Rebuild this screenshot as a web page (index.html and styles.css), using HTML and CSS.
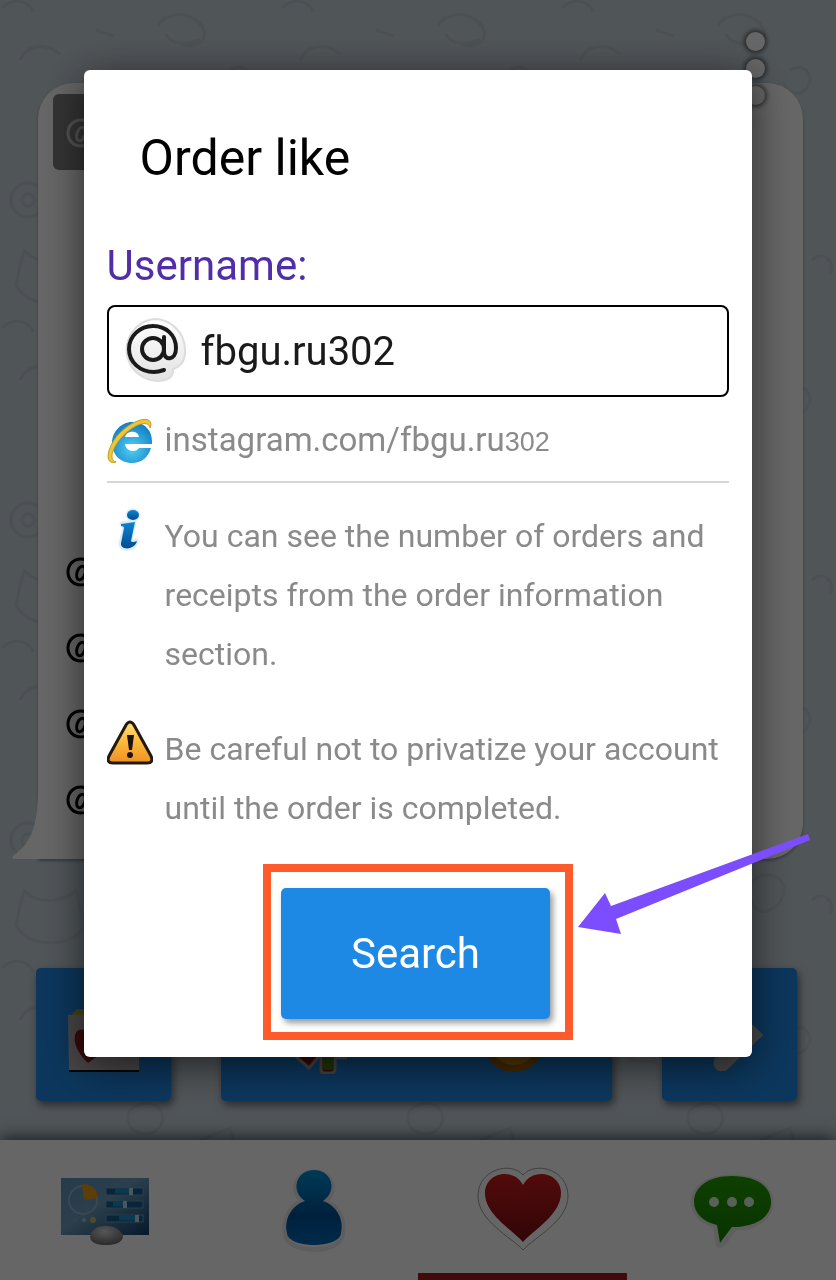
FILE: index.html
```html
<!DOCTYPE html>
<html lang="en">

<head>
    <meta charset="UTF-8">
    <meta name="viewport" content="width=device-width, initial-scale=1.0">
    <title>Order like</title>
    <link rel="stylesheet" href="styles.css">
</head>

<body>
    <svg width="0" height="0" class="defs" aria-hidden="true">
        <defs>
            <linearGradient id="blue" x1="0" y1="0" x2="0" y2="1">
                <stop offset="0" stop-color="#0a86cf" />
                <stop offset="1" stop-color="#034a94" />
            </linearGradient>
            <linearGradient id="person" x1="0" y1="0" x2="0" y2="1">
                <stop offset="0" stop-color="#0090d8" />
                <stop offset=".6" stop-color="#005298" />
                <stop offset="1" stop-color="#006ab8" />
            </linearGradient>
            <linearGradient id="red" x1="0" y1="0" x2="0" y2="1">
                <stop offset="0" stop-color="#cc1c1c" />
                <stop offset="1" stop-color="#7c0e12" />
            </linearGradient>
            <linearGradient id="green" x1="0" y1="0" x2="0" y2="1">
                <stop offset="0" stop-color="#23a000" />
                <stop offset="1" stop-color="#168000" />
            </linearGradient>
            <linearGradient id="board" x1="0" y1="0" x2="1" y2="1">
                <stop offset="0" stop-color="#5d93bd" />
                <stop offset=".45" stop-color="#6c9dbd" />
                <stop offset="1" stop-color="#11406f" />
            </linearGradient>
            <linearGradient id="gold" x1="0" y1="0" x2="0" y2="1">
                <stop offset="0" stop-color="#ffe07a" />
                <stop offset=".5" stop-color="#fdb73a" />
                <stop offset="1" stop-color="#ee9125" />
            </linearGradient>
            <linearGradient id="sticker" x1="0" y1="0" x2="0" y2="1">
                <stop offset="0" stop-color="#fff" />
                <stop offset="1" stop-color="#e2e2e2" />
            </linearGradient>
            <radialGradient id="ie" cx=".5" cy=".65" r=".6">
                <stop offset="0" stop-color="#4fd0f5" />
                <stop offset="1" stop-color="#1583c6" />
            </radialGradient>
            <radialGradient id="stone" cx=".45" cy=".3" r=".7">
                <stop offset="0" stop-color="#d8d8d8" />
                <stop offset="1" stop-color="#6c6c6c" />
            </radialGradient>
            <symbol id="at" viewBox="0 0 52 52">
                <circle cx="26" cy="26" r="11" fill="none" stroke="currentColor" stroke-width="4" />
                <path d="M37 14V29C37 38 49 38 49 25C49 12 39 3 26 3S2 13 2 26S13 49 27 49C31 49 34 48 37 47" fill="none" stroke="currentColor" stroke-width="4" stroke-linecap="round" />
            </symbol>
            <symbol id="at-bold" viewBox="0 0 30 30">
                <ellipse cx="15" cy="16" rx="4" ry="7" transform="rotate(18 15 16)" fill="none" stroke="currentColor" stroke-width="3" />
                <path d="M22 8L19 20C19 24 28 21 28 13C28 6 22 2 15 2C7 2 2 8 2 15S7 28 15 28C18 28 21 27 23 26" fill="none" stroke="currentColor" stroke-width="3" />
            </symbol>
            <pattern id="doodles" width="280" height="320" patternUnits="userSpaceOnUse">
                <g fill="none" stroke="#000" stroke-opacity=".05" stroke-width="3">
                    <path d="M158 26c8-14 30-16 42-2s-2 26-18 20M166 34c4 10 20 12 34 6" />
                    <circle cx="28" cy="200" r="17" />
                    <circle cx="28" cy="200" r="6" />
                    <path d="M20 60c10-20 30-14 40-6M70 100l14-18 12 20zM230 70c14-8 24 4 18 16s-22 8-24-4" />
                    <path d="M24 250c10 14 40 14 52 0l8 34c-4 24-60 26-68 0zM130 150c20-16 40 0 30 16s-40 6-30-16" />
                    <path d="M200 180l30-12 6 22-26 14zM190 250c0-20 34-20 34 0s-34 36-34 0M120 290l20-14 12 16" />
                    <path d="M3 8c10-12 28-6 30 4M252 260c12-10 24 2 18 14M110 220l10 20M96 30l18 6" />
                </g>
            </pattern>
        </defs>
    </svg>

    <div class="app">
        <svg class="wallpaper" aria-hidden="true">
            <rect width="100%" height="100%" fill="url(#doodles)" />
        </svg>

        <button class="menu" type="button" aria-label="Menu"><i></i><i></i><i></i></button>

        <div class="bubble">
            <div class="account"><svg><use href="#at-bold" /></svg></div>
            <ul class="list">
                <li><svg><use href="#at-bold" /></svg></li>
                <li><svg><use href="#at-bold" /></svg></li>
                <li><svg><use href="#at-bold" /></svg></li>
                <li><svg><use href="#at-bold" /></svg></li>
            </ul>
            <svg class="tail" viewBox="0 0 28 70" aria-hidden="true">
                <path d="M28 0H26C26 34 20 54 2 66Q-2 70 4 70H28z" fill="#fff" />
            </svg>
        </div>

        <div class="actions">
            <button type="button" aria-label="Photo">
                <svg width="78" height="74" viewBox="0 0 78 74">
                    <path d="M4 19L12 11H70V19z" fill="#a3ac32" />
                    <path d="M3 17L74 15V72H4z" fill="#b8aeb4" />
                    <path d="M4 73H74" stroke="#111" stroke-width="2" />
                    <path d="M23 65C3 46 9 28 19 32L25 40L37 32C47 28 51 48 23 65z" fill="#8c1a1a" />
                </svg>
            </button>
            <button class="wide" type="button" aria-label="Like and coins">
                <svg width="60" height="78" viewBox="0 0 60 78">
                    <path d="M4 58L20 72L32 58M32 56V74Q32 77 36 77H42Q46 77 46 73V62H58" fill="#86161c" stroke="#aaa" stroke-width="3" />
                    <path d="M34 56H44V74H34z" fill="#4a8508" />
                </svg>
                <svg width="60" height="76" viewBox="0 0 60 76">
                    <circle cx="30" cy="44" r="31" fill="#a86505" />
                    <circle cx="30" cy="44" r="24" fill="#d08a10" />
                </svg>
            </button>
            <button type="button" aria-label="Next">
                <svg width="70" height="72" viewBox="0 0 70 72">
                    <path d="M27 64L56 36L27 8" fill="none" stroke="#b5b5b5" stroke-width="17" stroke-linecap="round" />
                </svg>
            </button>
        </div>

        <nav class="tabs">
            <a href="#" aria-label="Dashboard">
                <svg width="92" height="84" viewBox="0 0 92 84">
                    <rect x="2" y="10" width="88" height="57" fill="url(#board)" />
                    <circle cx="24" cy="32" r="14" fill="none" stroke="#8fb3cf" stroke-width="2" />
                    <path d="M25 32L23 16Q38 16 39 30z" fill="#e89a16" />
                    <g fill="#185c92" stroke="#6d9bbd">
                        <rect x="47" y="20" width="37" height="7" />
                        <rect x="47" y="33" width="37" height="7" />
                        <rect x="47" y="47" width="37" height="7" />
                    </g>
                    <path d="M56 23H72M54 36H65M60 50H76" stroke="#1791c4" stroke-width="5" />
                    <path d="M72 20V27M66 33V40M78 47V54" stroke="#b9dce8" stroke-width="4" />
                    <circle cx="16" cy="52" r="2" fill="#6ba6c8" />
                    <circle cx="25" cy="52" r="2" fill="#89c8d0" />
                    <circle cx="34" cy="52" r="3" fill="#c5b96e" />
                    <path d="M31 69C32 54 61 54 64 69Q62 77 47 77T31 69z" fill="url(#stone)" />
                </svg>
            </a>
            <a href="#" aria-label="Profile">
                <svg width="72" height="90" viewBox="0 0 72 90">
                    <path d="M24 33C12 22 18 4 36 4S60 22 48 33C62 40 68 54 64 68C60 86 12 86 8 68C4 54 10 40 24 33z" fill="#fff" stroke="#ececec" stroke-width="5" transform="translate(0 3)" />
                    <path d="M27 36C12 26 18 5 36 5S60 26 45 36C60 41 66 56 63 68C62 84 10 84 9 68C6 56 12 41 27 36z" fill="url(#person)" />
                </svg>
            </a>
            <a href="#" class="active" aria-label="Likes">
                <svg width="96" height="90" viewBox="0 0 96 90">
                    <path d="M48 85C36 72 3 56 3 31C3 4 36-4 48 10C60-4 93 4 93 31C93 56 60 72 48 85z" fill="#fff" stroke="#96a3a5" stroke-width="1" />
                    <path d="M48 77C35 63 10 49 10 28C10 7 39 2 48 20C57 2 86 7 86 28C86 49 61 63 48 77z" fill="url(#red)" />
                </svg>
            </a>
            <a href="#" aria-label="Messages">
                <svg width="92" height="84" viewBox="0 0 92 84">
                    <path d="M46 9C20 9 7 20 7 34C7 45 16 54 30 58L32 75Q34 80 38 75L49 60C71 60 85 49 85 34C85 19 71 9 46 9z" fill="#fff" stroke="#ececec" stroke-width="5" />
                    <path d="M46 8C22 8 8 19 8 34C8 45 17 54 31 57L34 75L46 59C70 59 85 49 85 34C85 18 70 8 46 8z" fill="url(#green)" />
                    <g fill="#ddf0dc">
                        <circle cx="28" cy="34" r="5" />
                        <circle cx="46" cy="34" r="5" />
                        <circle cx="63" cy="34" r="5" />
                    </g>
                </svg>
            </a>
        </nav>
    </div>

    <div class="mask">
        <form class="dialog" role="dialog" aria-labelledby="title">
            <h1 id="title">Order like</h1>

            <label class="label" for="username">Username:</label>
            <div class="field">
                <svg width="66" height="68" viewBox="0 0 66 68">
                    <path d="M33 2A31 31 0 1 0 47 62Q53 58 52 52Q65 48 64 32A31 31 0 0 0 33 2z" fill="url(#sticker)" stroke="#dcdcdc" stroke-width="2" />
                    <svg x="6" y="6" width="52" height="52" color="#1a1a1a"><use href="#at" /></svg>
                </svg>
                <input id="username" type="text" value="fbgu.ru302" autocomplete="off" spellcheck="false">
            </div>

            <div class="row link">
                <svg width="46" height="46" viewBox="0 0 46 46">
                    <path d="M45 26H18C19 34 29 35 32 30H44C41 40 34 45 25 45C13 45 5 36 5 25S14 4 25 4C38 4 46 13 45 26zM18 19H32C31 12 20 12 18 19z" fill="url(#ie)" fill-rule="evenodd" />
                    <path d="M9 44C-5 48 1 25 15 13C27 2 43-3 44 6Q44 8 43 10C42 3 32 4 20 14C7 25 0 42 9 44z" fill="#edc63a" stroke="#c99d22" stroke-width="1" />
                </svg>
                <a href="#">instagram.com/fbgu.ru<span>302</span></a>
            </div>

            <div class="row">
                <svg width="46" height="46" viewBox="0 0 46 46">
                    <g stroke="#dcecf8" stroke-width="5" stroke-linejoin="round" fill="#dcecf8">
                        <ellipse cx="26" cy="8" rx="5" ry="4" />
                        <path d="M15 17L27 15L23 35Q24 37 29 34C27 43 14 43 14 37L18 20z" />
                    </g>
                    <ellipse cx="26" cy="8" rx="6" ry="5" fill="url(#blue)" />
                    <path d="M14 17L28 15L24 34Q25 36 30 34C28 43 13 44 14 36L17 21Q17 19 14 19z" fill="url(#blue)" />
                </svg>
                <p>You can see the number of orders and receipts from the order information section.</p>
            </div>

            <div class="row">
                <svg width="46" height="46" viewBox="0 0 46 46">
                    <path d="M19 5Q23-1 27 5L44 36Q47 43 40 43H6Q-1 43 2 36z" fill="url(#gold)" stroke="#221a12" stroke-width="3" />
                    <path d="M20 15H27L25 30H22z" fill="#1c140c" />
                    <circle cx="23" cy="35" r="3" fill="#1c140c" />
                </svg>
                <p>Be careful not to privatize your account until the order is completed.</p>
            </div>

            <div class="highlight">
                <button class="search" type="button">Search</button>
                <svg class="arrow" width="234" height="104" viewBox="0 0 234 104" aria-hidden="true">
                    <path d="M0 94L27 60L33 73L230 1L232 7L38 86L43 101z" fill="#7c4dff" />
                </svg>
            </div>
        </form>
    </div>
</body>

</html>
```
FILE: styles.css
```css
* {
    box-sizing: border-box;
    margin: 0;
    padding: 0;
    list-style: none;
}

body {
    font-family: Roboto, "Liberation Sans", sans-serif;
    background-color: #c8d4dc;
}

button {
    border: none;
    font-family: inherit;
    cursor: pointer;
}

.defs {
    position: absolute;
}

/* screen behind the dialog */
.app {
    position: relative;
    z-index: 0;
    display: flex;
    flex-direction: column;
    min-height: 100vh;
    padding-top: 83px;
    overflow: hidden;
}

.wallpaper {
    position: absolute;
    left: 0;
    top: 0;
    width: 100%;
    height: 100%;
}

.menu {
    position: absolute;
    right: 70px;
    top: 32px;
    z-index: 1;
    display: flex;
    flex-direction: column;
    gap: 8px;
    background: none;
}

.menu i {
    width: 19px;
    height: 19px;
    margin: 0 1px;
    border-radius: 50%;
    background-color: #fff;
    box-shadow: 0 0 4px 2px rgba(0, 0, 0, .5);
}

.bubble {
    position: relative;
    flex: 1;
    display: flex;
    flex-direction: column;
    justify-content: space-between;
    margin: 0 33px 109px 38px;
    padding: 11px 15px 22px;
    border-radius: 36px 36px 36px 0;
    background-color: #fff;
    box-shadow: 0 2px 3px rgba(0, 0, 0, .3);
}

.account {
    width: 80%;
    height: 76px;
    padding: 24px 13px;
    border-radius: 6px;
    background-color: #808080;
    color: #ccc;
}

.account svg,
.list svg {
    display: block;
    width: 30px;
    height: 30px;
}

.list li {
    height: 76px;
    padding: 24px 13px;
    color: #000;
}

.tail {
    position: absolute;
    left: -26px;
    bottom: 0;
    width: 28px;
    height: 70px;
}

.actions {
    position: relative;
    display: flex;
    gap: 50px;
    margin: 0 39px 39px 36px;
}

.actions button {
    display: flex;
    align-items: center;
    justify-content: center;
    width: 135px;
    height: 133px;
    border-radius: 5px;
    background-color: #1e88e5;
    box-shadow: 2px 4px 8px rgba(0, 0, 0, .5);
}

.actions .wide {
    flex: 1;
    width: auto;
    justify-content: space-around;
}

.tabs {
    position: relative;
    display: flex;
    height: 140px;
    background-color: #fff;
    box-shadow: 0 -2px 16px rgba(0, 0, 0, .7);
}

.tabs a {
    flex: 1;
    display: flex;
    align-items: center;
    justify-content: center;
}

.tabs .active {
    box-shadow: inset 0 -7px #a51c1c;
}

/* dialog */
.mask {
    position: fixed;
    inset: 0;
    display: flex;
    align-items: center;
    justify-content: center;
    padding-bottom: 153px;
    background-color: rgba(0, 0, 0, .6);
}

.dialog {
    width: 80%;
    padding: 58px 23px 17px;
    border-radius: 6px;
    background-color: #fff;
    box-shadow: 0 8px 40px rgba(0, 0, 0, .6);
}

h1 {
    padding-left: 33px;
    font-size: 50px;
    font-weight: 400;
    line-height: 60px;
    color: #000;
}

.label {
    display: block;
    margin-top: 48px;
    font-size: 42px;
    line-height: 60px;
    color: #512da8;
}

.field {
    display: flex;
    align-items: center;
    gap: 14px;
    height: 92px;
    margin-top: 9px;
    padding: 0 12px;
    border: 2px solid #000;
    border-radius: 8px;
}

.field input {
    flex: 1;
    min-width: 0;
    border: none;
    outline: none;
    background: none;
    font-family: inherit;
    font-size: 40px;
    color: #1a1a1a;
}

.row {
    display: flex;
    gap: 12px;
    margin-top: 36px;
    font-size: 32px;
    line-height: 59px;
    color: #8a8a8a;
}

.row svg {
    flex: none;
}

.row p {
    flex: 1;
}

.link {
    align-items: center;
    margin-top: 13px;
    padding-bottom: 9px;
    border-bottom: 2px solid #d6d6d6;
    font-size: 33px;
}

.link + .row {
    margin-top: 24px;
}

.link a {
    color: inherit;
    text-decoration: none;
}

.link span {
    font-family: "Liberation Sans", sans-serif;
    font-size: 27px;
}

.highlight {
    position: relative;
    width: 310px;
    margin: 26px auto 0;
    padding: 16px 15px 13px 10px;
    border: 8px solid #ff5a2c;
}

.search {
    display: block;
    width: 100%;
    height: 131px;
    border-radius: 5px;
    background-color: #1e88e5;
    box-shadow: 3px 4px 6px rgba(0, 0, 0, .4);
    font-size: 42px;
    color: #fff;
}

.arrow {
    position: absolute;
    left: calc(100% + 13px);
    top: -39px;
}
```
